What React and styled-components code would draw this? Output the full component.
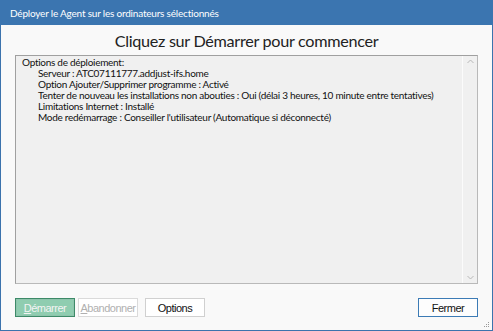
import React from "react";
import styled, { createGlobalStyle } from "styled-components";

const Global = createGlobalStyle`
  html, body {
    margin: 0;
    padding: 0;
    background: #ffffff;
  }
`;

const Window = styled.div`
  width: 493px;
  height: 331px;
  box-sizing: border-box;
  border: 1px solid #3b73ad;
  border-top: none;
  background: #f9f9f9;
  display: flex;
  flex-direction: column;
  font-family: Lato, "Noto Sans", sans-serif;
`;

const TitleBar = styled.div`
  height: 25px;
  background: #3b75b0;
  color: #ffffff;
  font-size: 10px;
  letter-spacing: -0.2px;
  display: flex;
  align-items: center;
  padding-left: 10px;
  margin: 0 -1px;
`;

const Body = styled.div`
  flex: 1;
  display: flex;
  flex-direction: column;
  padding: 0 14px 0 14px;
`;

const Heading = styled.div`
  height: 30px;
  display: flex;
  align-items: flex-end;
  justify-content: center;
  font-size: 16.2px;
  letter-spacing: -0.3px;
  color: #222;
  line-height: 24px;
  padding-bottom: 2px;
  box-sizing: border-box;
`;

const LogBox = styled.div`
  height: 229px;
  box-sizing: border-box;
  border: 1px solid #a0a0a0;
  border-right-color: #b9b9b9;
  border-bottom-color: #b9b9b9;
  background: #f0f0f0;
  display: flex;
`;

const LogText = styled.div`
  flex: 1;
  padding: 1px 0 0 6px;
  font-size: 10px;
  letter-spacing: -0.28px;
  line-height: 11px;
  color: #111;
`;

const Line = styled.div`
  padding-left: ${(p) => (p.$indent ? "16px" : "0")};
  white-space: nowrap;
`;

const ScrollBar = styled.div`
  width: 14px;
  border-left: 1px solid #fbfbfb;
  display: flex;
  flex-direction: column;
  justify-content: space-between;
  align-items: center;
  padding: 3px 0;
`;

const Footer = styled.div`
  display: flex;
  align-items: center;
  gap: 3px;
  padding-top: 14px;
`;

const Button = styled.button`
  width: ${(p) => p.$w || "60px"};
  height: 19px;
  box-sizing: border-box;
  margin-right: ${(p) => p.$mr || "0"};
  padding: 0;
  font-family: "Liberation Sans", Arial, sans-serif;
  font-size: 11px;
  letter-spacing: -0.5px;
  border: 1px solid ${(p) => p.$border || "#d0d0d0"};
  background: ${(p) => p.$bg || "#ffffff"};
  color: ${(p) => p.$color || "#111"};
  ${(p) => (p.$focus ? "box-shadow: inset 0 0 0 1px #8fc4ad;" : "")}
`;

const Spacer = styled.div`
  flex: 1;
`;

const Grip = styled.svg`
  position: absolute;
  right: 3px;
  bottom: 3px;
`;

const Frame = styled.div`
  position: relative;
`;

const Chevron = ({ up }) => (
  <svg width="7" height="5" viewBox="0 0 7 5">
    <path
      d={up ? "M0.5 4 L3.5 1 L6.5 4" : "M0.5 1 L3.5 4 L6.5 1"}
      fill="none"
      stroke="#b8b8b8"
      strokeWidth="1"
    />
  </svg>
);

export default function App() {
  return (
    <Frame>
      <Global />
      <Window>
        <TitleBar>Déployer le Agent sur les ordinateurs sélectionnés</TitleBar>
        <Body>
          <Heading>Cliquez sur Démarrer pour commencer</Heading>
          <LogBox>
            <LogText>
              <Line>Options de déploiement:</Line>
              <Line $indent>Serveur : ATC07111777.addjust-ifs.home</Line>
              <Line $indent>Option Ajouter/Supprimer programme : Activé</Line>
              <Line $indent>
                Tenter de nouveau les installations non abouties : Oui (délai 3 heures, 10 minute entre tentatives)
              </Line>
              <Line $indent>Limitations Internet : Installé</Line>
              <Line $indent>Mode redémarrage : Conseiller l'utilisateur (Automatique si déconnecté)</Line>
            </LogText>
            <ScrollBar>
              <Chevron up />
              <Chevron />
            </ScrollBar>
          </LogBox>
          <Footer>
            <Button $bg="#8fcdb0" $border="#3d8a68" $color="#f4f4f4" $focus>
              <u>D</u>émarrer
            </Button>
            <Button $border="#dadada" $color="#b0b0b0" $mr="4px">
              <u>A</u>bandonner
            </Button>
            <Button>Options</Button>
            <Spacer />
            <Button $border="#3c7bb5" $bg="#fdfdfd">Fermer</Button>
          </Footer>
        </Body>
      </Window>
      <Grip width="6" height="6" viewBox="0 0 6 6">
        <rect x="4" y="0" width="1" height="1" fill="#9a9a9a" />
        <rect x="2" y="2" width="1" height="1" fill="#9a9a9a" />
        <rect x="4" y="2" width="1" height="1" fill="#9a9a9a" />
        <rect x="0" y="4" width="1" height="1" fill="#9a9a9a" />
        <rect x="2" y="4" width="1" height="1" fill="#9a9a9a" />
        <rect x="4" y="4" width="1" height="1" fill="#9a9a9a" />
      </Grip>
    </Frame>
  );
}
